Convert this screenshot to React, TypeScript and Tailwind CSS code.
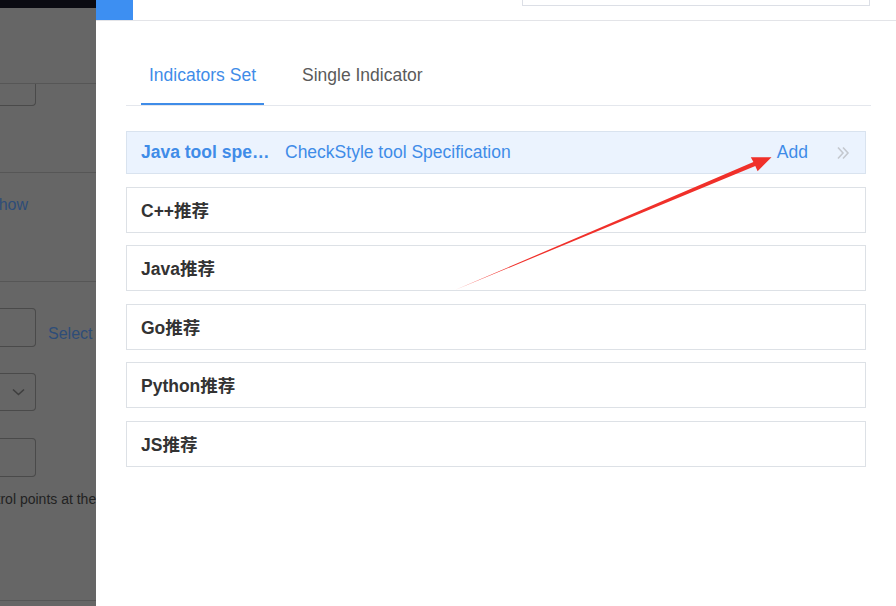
import React from "react";

const font = { fontFamily: '"Liberation Sans", Arial, "Noto Sans CJK SC", sans-serif' };

const presets = ["C++推荐", "Java推荐", "Go推荐", "Python推荐", "JS推荐"];

const Backdrop = () => (
  <div className="w-[96px] shrink-0 bg-[#666666] flex flex-col overflow-hidden">
    <div className="h-[8px] bg-[#0b0b12]" />
    <div className="mt-[75px] w-[96px] border-t border-[#565656]">
      <div className="w-[36px] h-[22px] border-r border-b border-[#4a4a4a] rounded-br-[4px]" />
    </div>
    <div className="mt-[66px] border-t border-[#565656]" />
    <p className="mt-[22px] -ml-[12px] text-[16px] leading-[20px] text-[#2e4d78] whitespace-nowrap">Show</p>
    <div className="mt-[66px] border-t border-[#565656]" />
    <div className="mt-[26px] flex items-center gap-[12px]">
      <div className="w-[36px] h-[39px] shrink-0 border-y border-r border-[#4a4a4a] rounded-r-[4px]" />
      <span className="mt-[12px] text-[16px] text-[#2e4d78] whitespace-nowrap">Select</span>
    </div>
    <div className="mt-[26px] w-[36px] h-[38px] border-y border-r border-[#4a4a4a] rounded-r-[4px] flex items-center justify-end pr-[10px]">
      <svg width="13" height="8" viewBox="0 0 13 8" fill="none" stroke="#3e3e3e" strokeWidth="1.6">
        <path d="M1 1.5l5.5 5 5.5-5" />
      </svg>
    </div>
    <div className="mt-[27px] w-[36px] h-[39px] border-y border-r border-[#4a4a4a] rounded-r-[4px]" />
    <p className="mt-[14px] -ml-[26px] text-[14px] leading-[16px] text-[#222] whitespace-nowrap">control points at the</p>
    <div className="mt-[93px] border-t border-[#565656]" />
  </div>
);

const Arrow = () => (
  <svg className="absolute inset-0 pointer-events-none" width="896" height="606">
    <polygon
      points="455,290 753.4,161.9 750.8,157.2 771.5,157.3 757.6,171.2 755.3,166.1"
      fill="#f0302a"
    />
  </svg>
);

export default function App() {
  return (
    <div className="relative w-[896px] h-[606px] flex overflow-hidden bg-white" style={font}>
      <Backdrop />
      <div className="flex-1 flex flex-col bg-white">
        <div className="h-[21px] shrink-0 flex border-b border-[#e3e4e8]">
          <div className="w-[37px] h-[20px] bg-[#3d8ff2]" />
          <div className="ml-auto mr-[26px] w-[348px] h-[6px] border-x border-b border-[#dcdfe6]" />
        </div>
        <div className="mt-[36px] ml-[30px] mr-[25px] flex border-b border-[#e4e7ed]">
          <div className="ml-[15px] px-[8px] h-[48px] pt-[7px] border-b-2 border-[#3f8ce8] -mb-px">
            <span className="text-[17.5px] leading-[20px] text-[#3f8ce8]">Indicators Set</span>
          </div>
          <div className="ml-[30px] px-[8px] h-[48px] pt-[7px]">
            <span className="text-[17.5px] leading-[20px] text-[#5a5a5a]">Single Indicator</span>
          </div>
        </div>
        <div className="mt-[25px] ml-[30px] mr-[30px] flex flex-col gap-[12.5px]">
          <div className="h-[43px] flex items-center px-[14px] bg-[#ebf3fe] border border-[#d9e3ef]">
            <span className="w-[132px] truncate text-[17.5px] font-bold text-[#3f8ce8]">Java tool specification</span>
            <span className="ml-[12px] text-[17.5px] text-[#3f8ce8]">CheckStyle tool Specification</span>
            <span className="ml-auto text-[17.5px] text-[#3f8ce8]">Add</span>
            <svg className="ml-[28px] mr-[1px]" width="14" height="14" viewBox="0 0 14 14" fill="none" stroke="#c4c8cf" strokeWidth="1.6">
              <path d="M2 1.5l5 5.5-5 5.5M7 1.5l5 5.5-5 5.5" />
            </svg>
          </div>
          {presets.map((name) => (
            <div key={name} className="h-[46px] flex items-center px-[14px] pt-[3px] border border-[#dde1e6]">
              <span className="text-[17.5px] font-bold text-[#333]">{name}</span>
            </div>
          ))}
        </div>
      </div>
      <Arrow />
    </div>
  );
}
